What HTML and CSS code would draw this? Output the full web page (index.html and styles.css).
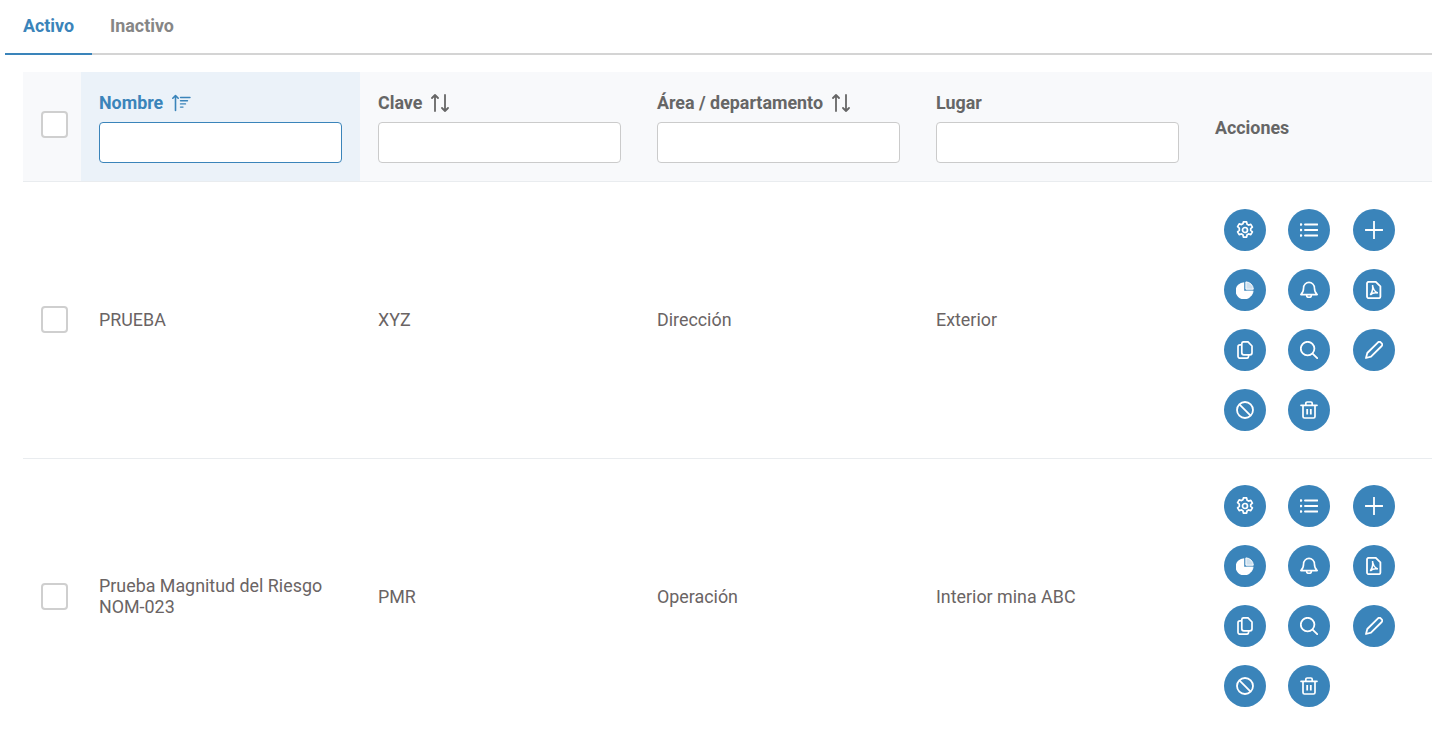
FILE: index.html
```html
<!DOCTYPE html>
<html lang="es">
<head>
<meta charset="utf-8">
<title>Lista</title>
<link rel="stylesheet" href="styles.css">
</head>
<body>
<svg class="defs" width="0" height="0" aria-hidden="true">
  <defs>
    <symbol id="i-cog" viewBox="0 0 18 18"><path fill="none" stroke="currentColor" stroke-width="1.7" stroke-linejoin="round" d="M7.400.9h3.200l.5 2.300 1.500.9 2.200-.8 1.600 2.800-1.700 1.500v1.800l1.700 1.500-1.600 2.800-2.200-.8-1.500.9-.5 2.300H7.400l-.5-2.300-1.500-.9-2.200.8-1.600-2.800 1.700-1.500V7.100L1.600 5.600l1.600-2.800 2.200.8 1.500-.9z"/><circle cx="9" cy="9" r="2.500" fill="none" stroke="currentColor" stroke-width="1.700"/></symbol>
    <symbol id="i-list" viewBox="0 0 18 18"><path fill="none" stroke="currentColor" stroke-width="1.900" stroke-linecap="round" d="M5 3.500h12.500M5 9h12.500M5 14.500h12.500"/><path fill="none" stroke="currentColor" stroke-width="2.400" stroke-linecap="round" d="M.8 3.500h.3M.8 9h.3M.8 14.500h.3"/></symbol>
    <symbol id="i-plus" viewBox="0 0 18 18"><path fill="none" stroke="currentColor" stroke-width="1.800" stroke-linecap="round" d="M9 .5v17M.5 9h17"/></symbol>
    <symbol id="i-pie" viewBox="0 0 18 18"><path fill="currentColor" d="M8.200 1.200v8.600h8.600A8.600 8.600 0 1 1 8.200 1.200z"/><path fill="currentColor" fill-opacity=".75" stroke="currentColor" stroke-width="1" d="M9.900 .9a7.600 7.600 0 0 1 7.400 7.300H9.900z"/><path fill="currentColor" fill-opacity=".9" d="M10.300 9.800h7.300a8 8 0 0 1-2.100 5.100z"/></symbol>
    <symbol id="i-bell" viewBox="0 0 18 18"><path fill="none" stroke="currentColor" stroke-width="1.600" stroke-linejoin="round" d="M3.600 6.800a5.400 5.400 0 0 1 10.800 0c0 3.400 1 5.300 2.800 6.800H.8c1.800-1.500 2.800-3.400 2.800-6.800z"/><path fill="none" stroke="currentColor" stroke-width="1.600" d="M6.600 13.900a2.400 2.400 0 0 0 4.800 0"/></symbol>
    <symbol id="i-pdf" viewBox="0 0 18 18"><path fill="none" stroke="currentColor" stroke-width="1.800" stroke-linejoin="round" d="M3.800.8h7l4.600 4.600v10a1.800 1.800 0 0 1-1.800 1.800H3.800A1.800 1.800 0 0 1 2 15.400V2.600A1.800 1.800 0 0 1 3.800.8z"/><path fill="none" stroke="currentColor" stroke-width="1.500" d="M7.500 4c.3 3.200 2 6.500 5.300 8-2.600-.5-5.800.2-7.500 2 1.500-2 2.800-6 2.200-10z"/></symbol>
    <symbol id="i-copy" viewBox="0 0 18 18"><path fill="none" stroke="currentColor" stroke-width="1.700" stroke-linejoin="round" d="M7.800.8h4.200l4 4.200v6.800a2 2 0 0 1-2 2H7.800a2 2 0 0 1-2-2V2.800a2 2 0 0 1 2-2z"/><path fill="none" stroke="currentColor" stroke-width="1.700" stroke-linejoin="round" d="M5.600 3.800H4a2 2 0 0 0-2 2v9.400a2 2 0 0 0 2 2h6.600a2 2 0 0 0 2-2v-1.400"/></symbol>
    <symbol id="i-search" viewBox="0 0 18 18"><circle cx="7.600" cy="7.600" r="6.800" fill="none" stroke="currentColor" stroke-width="1.800"/><path fill="none" stroke="currentColor" stroke-width="1.800" stroke-linecap="round" d="M12.600 12.600l4.600 4.600"/></symbol>
    <symbol id="i-pencil" viewBox="0 0 18 18"><path fill="none" stroke="currentColor" stroke-width="1.800" stroke-linejoin="round" d="M13 1.300a1.900 1.900 0 0 1 2.700 0l1 1a1.900 1.900 0 0 1 0 2.700L6 15.700l-5 1.300 1.300-5z"/></symbol>
    <symbol id="i-ban" viewBox="0 0 18 18"><circle cx="9" cy="9" r="8" fill="none" stroke="currentColor" stroke-width="1.800"/><path fill="none" stroke="currentColor" stroke-width="1.800" d="M3.400 3.400l11.200 11.200"/></symbol>
    <symbol id="i-trash" viewBox="0 0 18 18"><path fill="none" stroke="currentColor" stroke-width="1.700" stroke-linecap="round" stroke-linejoin="round" d="M1 4.300h16M5.800 4.300V2.300A1.300 1.300 0 0 1 7.100 1h3.800a1.300 1.300 0 0 1 1.300 1.300v2M3 4.300v11.200A1.500 1.500 0 0 0 4.500 17h9a1.500 1.500 0 0 0 1.500-1.500V4.300"/><path fill="none" stroke="currentColor" stroke-width="1.800" d="M7.200 8v5.500M10.800 8v5.500"/></symbol>
    <symbol id="i-sort" viewBox="0 0 20 18"><path fill="none" stroke="currentColor" stroke-width="1.800" stroke-linecap="round" stroke-linejoin="round" d="M5 17V1M2 4l3-3 3 3M15 1v16M12 14l3 3 3-3"/></symbol>
    <symbol id="i-sort-up" viewBox="0 0 20 18"><path fill="none" stroke="currentColor" stroke-width="1.600" stroke-linecap="round" stroke-linejoin="round" d="M4.500 16.500V1.500M1.800 4.200l2.700-2.700 2.700 2.700"/><path fill="none" stroke="currentColor" stroke-width="1.400" stroke-linecap="round" d="M9.500 3.500h9.500M9.500 6.700h7M9.500 9.900h5M9.500 13.100h2.500"/></symbol>
  </defs>
</svg>

<nav class="tabs">
  <a class="tab tab-active">Activo</a>
  <a class="tab">Inactivo</a>
</nav>

<table class="grid">
  <colgroup>
    <col class="c-check"><col class="c-data"><col class="c-data"><col class="c-data"><col class="c-data"><col class="c-actions">
  </colgroup>
  <thead>
    <tr>
      <th><span class="check"></span></th>
      <th class="sorted">
        <div class="head-label">Nombre <svg class="sort-icon"><use href="#i-sort-up"/></svg></div>
        <input class="filter" type="text">
      </th>
      <th>
        <div class="head-label">Clave <svg class="sort-icon"><use href="#i-sort"/></svg></div>
        <input class="filter" type="text">
      </th>
      <th>
        <div class="head-label">Área / departamento <svg class="sort-icon"><use href="#i-sort"/></svg></div>
        <input class="filter" type="text">
      </th>
      <th>
        <div class="head-label">Lugar</div>
        <input class="filter" type="text">
      </th>
      <th class="head-actions">Acciones</th>
    </tr>
  </thead>
  <tbody>
    <tr>
      <td class="txt"><span class="check"></span></td>
      <td class="txt">PRUEBA</td>
      <td class="txt">XYZ</td>
      <td class="txt">Dirección</td>
      <td class="txt">Exterior</td>
      <td>
        <div class="actions">
          <button class="act"><svg class="ico"><use href="#i-cog"/></svg></button>
          <button class="act"><svg class="ico"><use href="#i-list"/></svg></button>
          <button class="act"><svg class="ico"><use href="#i-plus"/></svg></button>
          <button class="act"><svg class="ico"><use href="#i-pie"/></svg></button>
          <button class="act"><svg class="ico"><use href="#i-bell"/></svg></button>
          <button class="act"><svg class="ico"><use href="#i-pdf"/></svg></button>
          <button class="act"><svg class="ico"><use href="#i-copy"/></svg></button>
          <button class="act"><svg class="ico"><use href="#i-search"/></svg></button>
          <button class="act"><svg class="ico"><use href="#i-pencil"/></svg></button>
          <button class="act"><svg class="ico"><use href="#i-ban"/></svg></button>
          <button class="act"><svg class="ico"><use href="#i-trash"/></svg></button>
        </div>
      </td>
    </tr>
    <tr>
      <td class="txt"><span class="check"></span></td>
      <td class="txt">Prueba Magnitud del Riesgo NOM-023</td>
      <td class="txt">PMR</td>
      <td class="txt">Operación</td>
      <td class="txt">Interior mina ABC</td>
      <td>
        <div class="actions">
          <button class="act"><svg class="ico"><use href="#i-cog"/></svg></button>
          <button class="act"><svg class="ico"><use href="#i-list"/></svg></button>
          <button class="act"><svg class="ico"><use href="#i-plus"/></svg></button>
          <button class="act"><svg class="ico"><use href="#i-pie"/></svg></button>
          <button class="act"><svg class="ico"><use href="#i-bell"/></svg></button>
          <button class="act"><svg class="ico"><use href="#i-pdf"/></svg></button>
          <button class="act"><svg class="ico"><use href="#i-copy"/></svg></button>
          <button class="act"><svg class="ico"><use href="#i-search"/></svg></button>
          <button class="act"><svg class="ico"><use href="#i-pencil"/></svg></button>
          <button class="act"><svg class="ico"><use href="#i-ban"/></svg></button>
          <button class="act"><svg class="ico"><use href="#i-trash"/></svg></button>
        </div>
      </td>
    </tr>
  </tbody>
</table>
</body>
</html>
```

FILE: styles.css
```css
* { box-sizing: border-box; }
html, body { margin: 0; overflow: hidden; height: 733px; }
body {
  background: #fff;
  font-family: Roboto, "Liberation Sans", sans-serif;
  font-size: 17.86px;
  color: #6a6464;
}
.defs { position: absolute; }

.tabs {
  display: flex;
  height: 55px;
  margin-left: 5px;
  border-bottom: 2px solid #d4d4d4;
}
.tab {
  height: 55px;
  padding: 15px 18px 0;
  font-weight: 700;
  line-height: 21px;
  color: #868686;
}
.tab-active {
  color: #3a84ba;
  border-bottom: 2px solid #3a84ba;
}

.grid {
  width: 1409px;
  margin: 17px 0 0 23px;
  border-collapse: collapse;
  table-layout: fixed;
  font-size: 17.86px;
}
.c-check { width: 58px; }
.c-data { width: 279px; }
.c-actions { width: 235px; }

.grid th {
  height: 109px;
  padding: 21px 18px 18px;
  background: #f8f9fb;
  border-bottom: 1px solid #e9ecef;
  color: #666;
  font-weight: 700;
  text-align: left;
  vertical-align: top;
}
.grid th:first-child, .grid td:first-child { vertical-align: middle; }
.grid th:first-child { padding-top: 16px; padding-bottom: 20px; }
.grid th.sorted { background: #ebf2f9; color: #3a84ba; }
.grid th.head-actions { vertical-align: middle; padding-top: 20px; padding-bottom: 18px; }

.head-label {
  display: flex;
  align-items: center;
  height: 20px;
  margin-bottom: 9px;
  line-height: 20px;
}
.sort-icon {
  width: 20px;
  height: 18px;
  margin-left: 8px;
}
.filter {
  display: block;
  width: 243px;
  height: 41px;
  padding: 0 10px;
  background: #fff;
  border: 1px solid #cbcbcb;
  border-radius: 4px;
  outline: none;
}
.sorted .filter { border-color: #3a84ba; }

.grid td {
  padding: 18px;
  height: 277px;
  border-bottom: 1px solid #e9ecef;
  line-height: 21px;
  vertical-align: middle;
}
.grid td.txt { padding-bottom: 20px; }

.check {
  display: block;
  width: 27px;
  height: 27px;
  background: #fff;
  border: 2px solid #cfcfcf;
  border-radius: 4px;
}

.actions {
  display: grid;
  grid-template-columns: 64px 65px 42px;
  grid-auto-rows: 60px;
  align-items: center;
  padding-left: 9px;
}
tr + tr .actions { margin-top: -2px; }
.act {
  display: flex;
  align-items: center;
  justify-content: center;
  width: 42px;
  height: 42px;
  padding: 0;
  background: #3a84ba;
  border: 0;
  border-radius: 50%;
  color: #fff;
}
.ico { width: 18px; height: 18px; }
```
